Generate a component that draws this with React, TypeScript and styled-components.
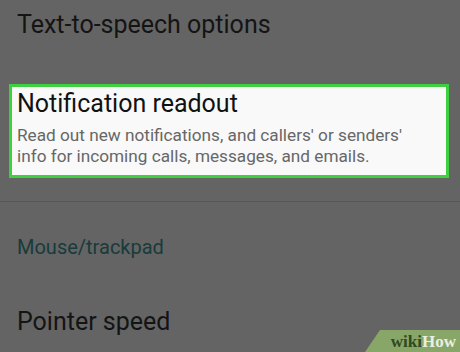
import React from 'react'
import styled, { createGlobalStyle } from 'styled-components'

const Global = createGlobalStyle`
  html, body {
    margin: 0;
    padding: 0;
    background: #646464;
  }
  body {
    font-family: Roboto, "Noto Sans", sans-serif;
  }
`

const Screen = styled.div`
  position: relative;
  width: 460px;
  height: 352px;
  overflow: hidden;
  background: #646464;
`

const Title = styled.div<{ $top?: number }>`
  padding: ${(p) => p.$top ?? 0}px 0 0 17px;
  font-size: 25px;
  line-height: 30px;
  color: #141414;
  white-space: nowrap;
`

const Highlight = styled.div`
  margin: 44px 0 0 9px;
  width: 440px;
  height: 94px;
  box-sizing: border-box;
  border: 3px solid #3fd03f;
  background: #f9f9f9;
  padding: 2px 0 0 5px;
`

const HighlightTitle = styled.div`
  font-size: 25px;
  line-height: 30px;
  color: #111;
  white-space: nowrap;
`

const Summary = styled.div`
  margin-top: 6px;
  font-size: 17.2px;
  line-height: 21px;
  color: #676767;
  white-space: nowrap;
`

const Divider = styled.div`
  margin-top: 23px;
  height: 1px;
  background: #575757;
`

const Category = styled.div`
  padding: 33px 0 0 17px;
  font-size: 20px;
  line-height: 24px;
  color: #183b3b;
`

const Badge = styled.div`
  position: absolute;
  right: 0;
  bottom: 0;
  width: 95px;
  height: 22px;
  background: #87a668;
  clip-path: polygon(15px 0, 100% 0, 100% 100%, 0 100%);
  display: flex;
  align-items: center;
  justify-content: flex-end;
  padding: 1px 4px 0 0;
  box-sizing: border-box;
  font-family: "Liberation Serif", serif;
  font-weight: bold;
  font-size: 17px;
`

const Wiki = styled.span`
  color: #2f4a22;
`

const How = styled.span`
  color: #e9efe2;
`

export default function App() {
  return (
    <Screen>
      <Global />
      <Title $top={10}>Text-to-speech options</Title>
      <Highlight>
        <HighlightTitle>Notification readout</HighlightTitle>
        <Summary>
          Read out new notifications, and callers' or senders'
          <br />
          info for incoming calls, messages, and emails.
        </Summary>
      </Highlight>
      <Divider />
      <Category>Mouse/trackpad</Category>
      <Title $top={48}>Pointer speed</Title>
      <Badge>
        <Wiki>wiki</Wiki>
        <How>How</How>
      </Badge>
    </Screen>
  )
}
